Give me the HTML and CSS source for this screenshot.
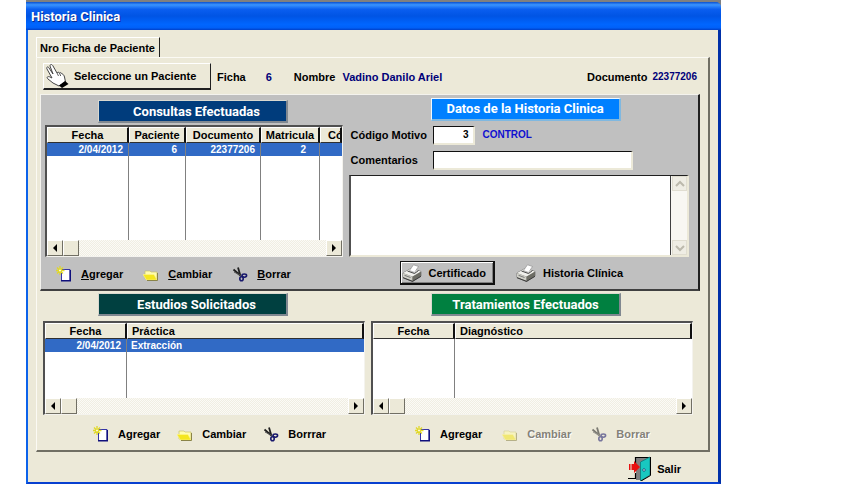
FILE: index.html
```html
<!DOCTYPE html>
<html lang="es">
<head>
<meta charset="utf-8">
<title>Historia Clinica</title>
<link rel="stylesheet" href="styles.css">
</head>
<body>
<svg class="defs" aria-hidden="true">
  <symbol id="i-new" viewBox="0 0 16 16">
    <path d="M5.500 3.500H14V14.500H5.500z" fill="#fff" stroke="#3434a8" stroke-width="1"/>
    <path d="M14.300 4v10.800H5" stroke="#10107c" stroke-width="1.400" fill="none"/>
    <path d="M4 0v9M0 4.500h8.500M1 1.500l6 6M7 1.500l-6 6" stroke="#e0d828" stroke-width="1.300" fill="none"/>
    <path d="M4 3.500v2M3 4.500h2" stroke="#fffbd0" stroke-width="1"/>
  </symbol>
  <symbol id="i-folder" viewBox="0 0 16 16">
    <path d="M2 5h5l1 1h6v7H2z" fill="#fffcb0" stroke="#c0b860" stroke-width=".6"/>
    <path d="M0 8.500h11l3 5.500H3.500z" fill="#f4e620" stroke="#fff68c" stroke-width=".6"/>
    <path d="M14.500 7v7.500H4" fill="none" stroke="#8a8448" stroke-width="1"/>
  </symbol>
  <symbol id="i-cut" viewBox="0 0 16 16">
    <path d="M1.500 3.500L9 10M6 1.500L8.500 10" stroke="#202020" stroke-width="1.800" fill="none"/>
    <path d="M2 6l7 3.500" stroke="#555" stroke-width="1" fill="none"/>
    <ellipse cx="12.300" cy="9.600" rx="2.300" ry="1.600" fill="none" stroke="#18186c" stroke-width="1.600"/>
    <ellipse cx="9.500" cy="12.700" rx="1.700" ry="2" fill="none" stroke="#18186c" stroke-width="1.600"/>
  </symbol>
  <symbol id="i-print" viewBox="0 0 20 18">
    <path d="M1 9l8-4.500L19 7.500V12l-8.500 5.500L1 13.500z" fill="#8c8c84" stroke="#555" stroke-width=".6"/>
    <path d="M1 9l8-4.500L19 7.500 10.500 12.500z" fill="#f0f0ec"/>
    <path d="M1 9.300l9.500 3.400v4L1 13.300z" fill="#d0d0c8"/>
    <path d="M10.500 12.700L19 7.800V12l-8.500 5z" fill="#6c6c64"/>
    <path d="M7.500 6.500L11.500.8l5 1.700-4 6z" fill="#fff" stroke="#888" stroke-width=".6"/>
    <path d="M5.500 7l7 2.500 4-3" fill="none" stroke="#444" stroke-width="1"/>
    <path d="M2.500 11.300l6 2.200" stroke="#777" stroke-width="1"/>
    <path d="M1 13.700l9.500 3.700L19 12.300" fill="none" stroke="#333" stroke-width=".9"/>
  </symbol>
  <symbol id="i-hand" viewBox="0 0 24 24">
    <path d="M14 22L8 19 3 15c-2-2 0-3 2-2l2 1L2 5c-1-2 1-3 2-1l4 6L5 2c0-2 2-2 3 0l4 7c1-1 2-1 2.500 0 1-1 2 0 2.500 1 1 0 2 1 2.500 3l1 5z" fill="#fff" stroke="#444" stroke-width="1"/>
    <path d="M12 9l1.500 3M14.500 9l1.200 3" stroke="#333" stroke-width=".8"/>
    <path d="M20 17l3.500 3-6.500 4-3-2.500z" fill="#000"/>
  </symbol>
  <symbol id="i-exit" viewBox="0 0 24 25">
    <path d="M8 1h14v2L13 24H8z" fill="#808080"/>
    <path d="M7.500 11V1.500H22M0 22.500h7.500V17" fill="none" stroke="#000" stroke-width="1.200"/>
    <path d="M12.500 6L22 1v18l-9.500 6z" fill="#18c8c0" stroke="#087878" stroke-width=".8"/>
    <path d="M22.500 1v18.500L13 25" fill="none" stroke="#000" stroke-width="1"/>
    <circle cx="16" cy="14" r="1.300" fill="#c8f4f0" stroke="#036" stroke-width=".7"/>
    <path d="M1 8v6h1.500V8zM3.500 8H6V5l6 6-6 6v-3H3.500z" fill="#e81010"/>
  </symbol>
</svg>
<main class="window">
  <header class="title"><h1>Historia Clinica</h1></header>
  <div class="content">
    <button class="tab" type="button">Nro Ficha de Paciente</button>
    <section class="page">
      <div class="patient">
        <button class="select" type="button"><svg class="hand"><use href="#i-hand"/></svg><span>Seleccione un Paciente</span></button>
        <span>Ficha</span><b class="val num">6</b>
        <span>Nombre</span><b class="val name">Vadino Danilo Ariel</b>
        <span>Documento</span><b class="val doc">22377206</b>
      </div>

      <div class="history">
        <section class="visits">
          <h2 class="banner navy">Consultas Efectuadas</h2>
          <div class="grid-box tall">
            <div class="rows">
              <table>
                <colgroup><col class="c-date"><col class="c-pat"><col class="c-doc"><col class="c-mat"><col></colgroup>
                <thead><tr><th>Fecha</th><th>Paciente</th><th>Documento</th><th>Matricula</th><th class="clip">Có</th></tr></thead>
                <tbody>
                  <tr class="sel"><td>2/04/2012</td><td class="far">6</td><td>22377206</td><td class="farther">2</td><td></td></tr>
                  <tr class="rest"><td></td><td></td><td></td><td></td><td></td></tr>
                </tbody>
              </table>
            </div>
            <div class="hbar"><button type="button" aria-label="Izquierda" class="left"></button><i></i><button type="button" aria-label="Derecha" class="right"></button></div>
          </div>
          <div class="tools first">
            <button type="button"><svg><use href="#i-new"/></svg><span><u>A</u>gregar</span></button>
            <button type="button"><svg><use href="#i-folder"/></svg><span><u>C</u>ambiar</span></button>
            <button type="button"><svg><use href="#i-cut"/></svg><span><u>B</u>orrar</span></button>
          </div>
        </section>

        <section class="detail">
          <h2 class="banner sky">Datos de la Historia Clinica</h2>
          <div class="field"><label for="motivo">Código Motivo</label><input id="motivo" class="code" value="3"><span class="reason">CONTROL</span></div>
          <div class="field"><label for="coment">Comentarios</label><input id="coment" class="comment"></div>
          <div class="memo">
            <textarea aria-label="Detalle"></textarea>
            <div class="vbar">
              <button type="button" aria-label="Subir"><svg viewBox="0 0 12 12"><path d="M2 8l4-4 4 4"/></svg></button>
              <button type="button" aria-label="Bajar"><svg viewBox="0 0 12 12"><path d="M2 4l4 4 4-4"/></svg></button>
            </div>
          </div>
          <div class="prints">
            <button class="framed" type="button"><svg><use href="#i-print"/></svg><span>Certificado</span></button>
            <button type="button"><svg><use href="#i-print"/></svg><span>Historia Clínica</span></button>
          </div>
        </section>
      </div>

      <div class="lower">
        <section>
          <h2 class="banner teal">Estudios Solicitados</h2>
          <div class="grid-box">
            <div class="rows">
              <table>
                <colgroup><col class="c-date"><col></colgroup>
                <thead><tr><th>Fecha</th><th class="start">Práctica</th></tr></thead>
                <tbody>
                  <tr class="sel"><td>2/04/2012</td><td class="start">Extracción</td></tr>
                  <tr class="rest"><td></td><td></td></tr>
                </tbody>
              </table>
            </div>
            <div class="hbar"><button type="button" aria-label="Izquierda" class="left"></button><i></i><button type="button" aria-label="Derecha" class="right"></button></div>
          </div>
          <div class="tools studies">
            <button type="button"><svg><use href="#i-new"/></svg><span>Agregar</span></button>
            <button type="button"><svg><use href="#i-folder"/></svg><span>Cambiar</span></button>
            <button type="button"><svg><use href="#i-cut"/></svg><span>Borrrar</span></button>
          </div>
        </section>
        <section>
          <h2 class="banner green">Tratamientos Efectuados</h2>
          <div class="grid-box">
            <div class="rows">
              <table>
                <colgroup><col class="c-date"><col></colgroup>
                <thead><tr><th>Fecha</th><th class="start">Diagnóstico</th></tr></thead>
                <tbody><tr class="rest"><td></td><td></td></tr></tbody>
              </table>
            </div>
            <div class="hbar"><button type="button" aria-label="Izquierda" class="left"></button><i></i><button type="button" aria-label="Derecha" class="right"></button></div>
          </div>
          <div class="tools treatments">
            <button type="button"><svg><use href="#i-new"/></svg><span>Agregar</span></button>
            <button type="button" disabled><svg><use href="#i-folder"/></svg><span>Cambiar</span></button>
            <button type="button" disabled><svg><use href="#i-cut"/></svg><span>Borrar</span></button>
          </div>
        </section>
      </div>
    </section>
    <footer><button class="exit" type="button"><svg><use href="#i-exit"/></svg><span>Salir</span></button></footer>
  </div>
</main>
</body>
</html>
```
FILE: styles.css
```css
* { box-sizing: border-box; }
body {
  margin: 0;
  background: #fff;
  color: #000;
  font: bold 11px/14px "Liberation Sans", Arial, sans-serif;
}
button, input, textarea { font: inherit; color: inherit; margin: 0; border-radius: 0; }
button { border: 0; padding: 0; background: none; display: flex; align-items: center; white-space: nowrap; }
h1, h2 { margin: 0; font: bold 13px/18px Roboto, "Liberation Sans", sans-serif; color: #fff; }
.defs { position: absolute; width: 0; height: 0; }

.window {
  margin: 0 141px 0 26px;
  min-height: 100vh;
  display: flex;
  flex-direction: column;
  background: #808080;
  padding-top: 2px;
}
.title {
  height: 28px;
  padding: 2px 5px 0;
  display: flex;
  align-items: center;
  border-radius: 0 5px 0 0;
  background: linear-gradient(#0a50d0, #3a94ff 10%, #0a5ef0 26%, #0054e4 50%, #0066ff 80%, #0060f8 92%, #0040c8);
}
.title h1 { text-shadow: 1px 1px #0a2a90; }
.content {
  flex: 1;
  padding: 7px 8px 0;
  background: #ece9d8;
  border: 2px solid #0840d0;
  border-left-color: #0c62ea;
  border-right: 3px solid #0030a8;
  border-top: 0;
}
.tab {
  height: 20px;
  width: 124px;
  padding-left: 3px;
  border-top: 1px solid #fff;
  border-left: 1px solid #fff;
  border-right: 1px solid #202020;
}
.page { border: 1px solid #fbfaf4; border-right: 2px solid #716f64; border-bottom: 2px solid #716f64; }

.patient { display: flex; align-items: center; height: 36px; padding: 5px 11px 4px 6px; }
.select {
  height: 27px;
  width: 168px;
  margin-right: 6px;
  border: 1px solid #fff;
  border-right: 1px solid #202020;
  border-bottom: 2px solid #202020;
}
.hand { width: 24px; height: 24px; margin: 0 5px 0 1px; }
.val { color: #000078; }
.num { margin: 0 22px 0 20px; }
.name { margin-left: 7px; margin-right: auto; }
.doc { margin-left: 5px; font-size: 10px; }

.history {
  display: grid;
  grid-template-columns: 298fr 341fr;
  column-gap: 6px;
  margin: 0 8px 0 3px;
  padding: 3px 9px 2px 4px;
  height: 197px;
  background: #c0c0c0;
  border: 1px solid #f4f3ee;
  border-right: 2px solid #202020;
  border-bottom: 2px solid #404040;
}
.visits { padding-top: 2px; min-width: 0; }
.banner {
  width: 190px;
  height: 23px;
  padding-top: 2px;
  display: flex;
  align-items: center;
  justify-content: center;
  white-space: nowrap;
  border: 1px solid #d8d8d0;
  border-right: 2px solid #808890;
  border-bottom: 2px solid #808890;
}
.navy { background: #003c7c; margin: 0 0 2px 53px; padding-left: 8px; }
.sky { background: #0080ff; margin: 0 0 4px 82px; padding-top: 0; border-color: #f0f8ff #80b8e0 #80b8e0 #f0f8ff; }
.teal { background: #004040; margin: 0 0 5px 55px; padding-left: 8px; }
.green { background: #008040; margin: 0 0 5px 60px; }

.grid-box {
  height: 94px;
  display: flex;
  flex-direction: column;
  background: #fff;
  border: 2px solid #505050;
  border-right: 1px solid #f4f3ee;
  border-bottom: 1px solid #f4f3ee;
}
.tall { height: 132px; }
.rows { flex: 1; min-height: 0; display: flex; }
table { width: 100%; height: 100%; border-collapse: separate; border-spacing: 0; table-layout: fixed; font-size: 10px; line-height: 12px; }
th, td { padding: 0; overflow: hidden; white-space: nowrap; }
th {
  height: 16px;
  font-size: 11px;
  background: #ece9d8;
  border: 1px solid #fff;
  border-right: 2px solid #101010;
  border-bottom: 1px solid #303030;
}
th.clip { text-align: left; padding-left: 7px; }
td { height: 13px; text-align: right; padding-right: 5px; border-right: 1px solid #808080; }
td.far { padding-right: 8px; }
td.farther { padding-right: 13px; }
td:last-child { border-right: 0; }
.start { text-align: left; padding-left: 4px; }
.sel { color: #fff; background: #316ac5; }
.rest td { height: auto; }
.c-date { width: 82px; }
.c-pat { width: 57px; }
.c-doc { width: 75px; }
.c-mat { width: 59px; }

.hbar { height: 16px; display: flex; background: repeating-conic-gradient(#fbfaf6 0 25%, #f0eee2 0 50%) 0 0 / 2px 2px; }
.hbar button, .hbar i {
  width: 16px;
  height: 16px;
  justify-content: center;
  background: #ece9d8;
  border: 1px solid #fff;
  border-right-color: #716f64;
  border-bottom-color: #716f64;
}
.hbar .right { margin-left: auto; }
.hbar button::before { content: ""; border: 4px solid transparent; border-left-width: 0; border-right: 4px solid #000; }
.hbar .right::before { border-right-width: 0; border-left: 4px solid #000; }

.tools { display: flex; align-items: center; height: 24px; margin-top: 5px; gap: 20px; }
.tools svg { width: 16px; height: 16px; margin-right: 9px; }
.first { padding-left: 11px; }
.studies { padding-left: 50px; margin-top: 7px; gap: 17px; }
.treatments { padding-left: 44px; margin-top: 7px; }
.tools button:disabled { color: #858278; text-shadow: 1px 1px #fff; }
.tools button:disabled svg { opacity: .55; }

.detail { min-width: 0; }
.field { display: flex; align-items: center; height: 20px; margin-bottom: 5px; }
.field label { width: 84px; padding-left: 2px; white-space: nowrap; }
.field input {
  height: 19px;
  padding: 0 4px;
  background: #fff;
  border: 1px solid #101010;
  border-right: 2px solid #ece9d8;
  border-bottom: 2px solid #ece9d8;
}
.field .code { width: 42px; text-align: right; font-size: 10px; }
.comment { width: 200px; }
.reason { margin-left: 8px; color: #1010d0; font-size: 10px; }
.memo {
  display: flex;
  height: 82px;
  margin-bottom: 4px;
  background: #fff;
  border: 2px solid #ece9d8;
  border-top: 1px solid #202020;
  border-left: 2px solid #505050;
}
.memo textarea { flex: 1; min-width: 0; border: 0; padding: 2px; resize: none; background: #fff; overflow: hidden; }
.vbar { width: 17px; border-left: 1px solid #404040; background: #f8f7f2; display: flex; flex-direction: column; justify-content: space-between; padding-left: 1px; }
.vbar button { height: 15px; justify-content: center; background: #efede4; border: 1px solid #e0ddd0; }
.vbar svg { width: 12px; height: 12px; fill: none; stroke: #bcb9ac; stroke-width: 2; }
.prints { display: flex; gap: 21px; padding-left: 51px; }
.prints svg { width: 20px; height: 18px; margin-right: 7px; }
.prints button { height: 24px; }
.framed { padding: 0 7px 0 1px; border: 1px solid #101010; border-width: 1px 2px 2px 1px; box-shadow: inset 1px 1px #fff, inset -1px -1px #808080; }

.lower { display: grid; grid-template-columns: 1fr 1fr; column-gap: 6px; padding: 2px 15px 4px 6px; }
footer { display: flex; justify-content: flex-end; padding: 4px 29px 0 0; }
.exit svg { width: 24px; height: 25px; margin-right: 5px; }
```
